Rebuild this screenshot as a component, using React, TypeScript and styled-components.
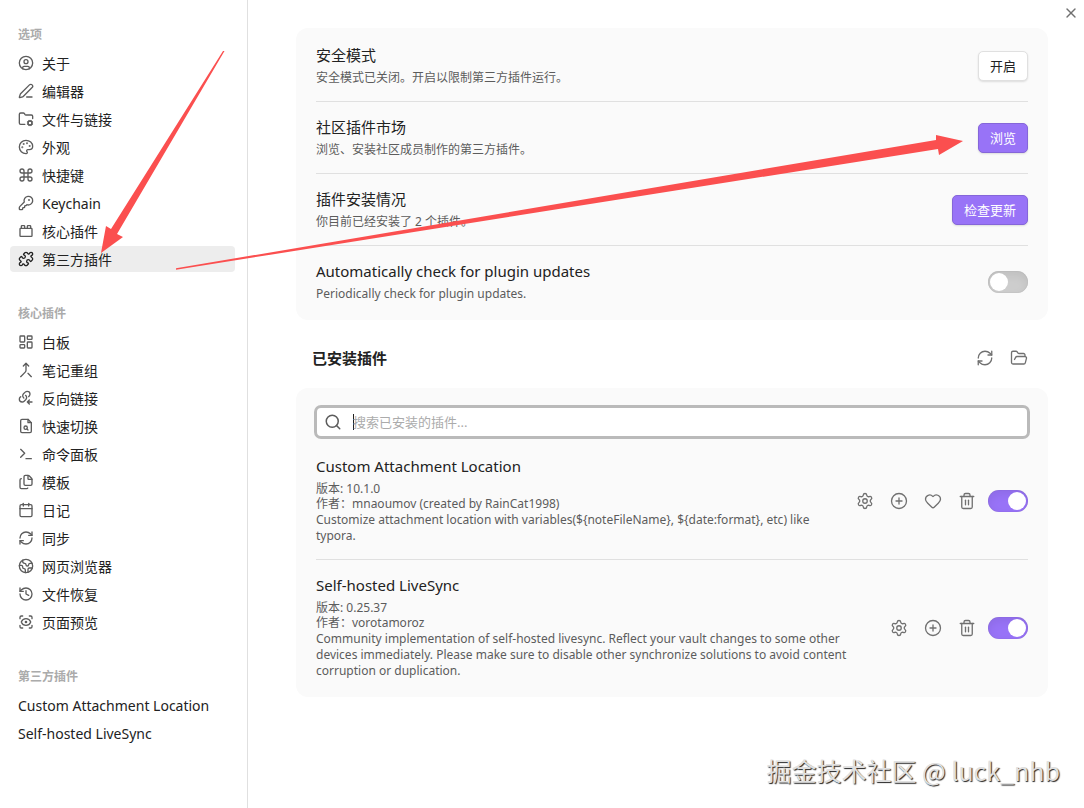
import React, { ReactNode } from "react";
import styled, { createGlobalStyle } from "styled-components";
import {
  CircleUser,
  PenLine,
  FolderCog,
  Palette,
  Command,
  KeyRound,
  ToyBrick,
  Puzzle,
  LayoutDashboard,
  Merge,
  Terminal,
  Files,
  Calendar,
  RefreshCw,
  Earth,
  History,
  ScanEye,
  Settings,
  CirclePlus,
  Heart,
  Trash2,
  FolderOpen,
  Search,
  X,
} from "lucide-react";

const GlobalStyle = createGlobalStyle`
  *, *::before, *::after { box-sizing: border-box; }
  body {
    margin: 0;
    background: #fff;
    color: #222;
    font-family: "Noto Sans", "Noto Sans CJK SC", sans-serif;
    font-size: 14px;
  }
  button, input { font: inherit; color: inherit; }
  h2, h3, p, ul { margin: 0; padding: 0; }
`;

const Page = styled.div`
  position: relative;
  display: flex;
  min-height: 100vh;
`;

const Sidebar = styled.nav`
  display: flex;
  flex-direction: column;
  gap: 32px;
  flex: 0 0 248px;
  padding: 25px 12px 24px 10px;
  border-right: 1px solid #e0e0e0;
`;

const GroupTitle = styled.h2`
  padding: 0 8px;
  font-size: 12px;
  line-height: 20px;
  font-weight: 600;
  color: #ababab;
`;

const NavList = styled.ul`
  display: flex;
  flex-direction: column;
  gap: 2px;
  margin-top: 5px;
  list-style: none;
`;

const NavLink = styled.a<{ $active?: boolean }>`
  display: flex;
  align-items: center;
  gap: 8px;
  height: 26px;
  padding: 0 8px;
  border-radius: 4px;
  background: ${(p) => (p.$active ? "#ededed" : "transparent")};
  color: #222;
  text-decoration: none;
  white-space: nowrap;
  svg {
    flex: none;
    color: ${(p) => (p.$active ? "#222" : "#5c5c5c")};
  }
`;

const Main = styled.main`
  flex: 1;
  min-width: 0;
  padding: 28px 36px 48px 48px;
`;

const Card = styled.section`
  padding: 2px 20px 3px;
  border-radius: 12px;
  background: #fafafa;
`;

const Row = styled.div`
  display: flex;
  align-items: center;
  justify-content: space-between;
  gap: 16px;
  padding: 14px 0 13px;
  & + & { border-top: 1px solid #e0e0e0; }
`;

const RowText = styled.div`
  max-width: 544px;
`;

const RowName = styled.h3`
  font-size: 15px;
  line-height: 22px;
  font-weight: 400;
`;

const RowDescription = styled.div`
  padding: 4px 0 2px;
  font-size: 12px;
  line-height: 16px;
  color: #5c5c5c;
`;

const PluginVersion = styled.p`
  line-height: 15px;
`;

const Controls = styled.div`
  display: flex;
  align-items: center;
  gap: 10px;
`;

const Button = styled.button<{ $accent?: boolean }>`
  height: 30px;
  padding: 0 11px;
  border: 1px solid ${(p) => (p.$accent ? "#8566d9" : "#e0e0e0")};
  border-radius: 5px;
  background: ${(p) => (p.$accent ? "#9873f7" : "#fff")};
  color: ${(p) => (p.$accent ? "#fff" : "#222")};
  font-size: 13px;
  line-height: 20px;
  box-shadow: 0 1px 2px rgba(0, 0, 0, 0.12);
`;

const IconButton = styled.button`
  display: flex;
  align-items: center;
  justify-content: center;
  width: 22px;
  height: 22px;
  padding: 0;
  border: 0;
  background: transparent;
  color: #707070;
`;

const IconGroup = styled.div`
  display: flex;
  gap: 12px;
`;

const Switch = styled.input`
  appearance: none;
  display: flex;
  align-items: center;
  width: 40px;
  height: 22px;
  margin: 0;
  padding: 2px;
  border-radius: 11px;
  background: #cdcdcd;
  box-shadow: inset 0 4px 10px rgba(0, 0, 0, 0.07), inset 0 0 1px rgba(0, 0, 0, 0.21);
  &::before {
    content: "";
    width: 18px;
    height: 18px;
    border-radius: 50%;
    background: #fff;
  }
  &:checked {
    justify-content: flex-end;
    background: #9873f7;
  }
`;

const InstalledHeader = styled.header`
  display: flex;
  align-items: center;
  justify-content: space-between;
  padding: 26px 18px 18px 16px;
`;

const InstalledTitle = styled.h2`
  font-size: 15px;
  line-height: 24px;
  font-weight: 700;
`;

const SearchCard = styled(Card)`
  padding: 17px 18px 3px;
`;

const SearchBox = styled.label`
  display: flex;
  align-items: center;
  gap: 11px;
  height: 34px;
  padding: 0 7px;
  border: 3px solid #bababa;
  border-radius: 7px;
  background: #fff;
  color: #5c5c5c;
`;

const SearchInput = styled.input`
  flex: 1;
  min-width: 0;
  height: 24px;
  padding: 0;
  border: 0;
  outline: 0;
  background: transparent;
  font-size: 13px;
  color: #222;
  &::placeholder { color: #ababab; opacity: 1; }
`;

const Caret = styled.span`
  width: 1px;
  height: 16px;
  margin-right: -12px;
  background: #222;
`;

const PluginList = styled.div`
  padding: 2px 2px 0;
`;

const CloseButton = styled(IconButton)`
  position: absolute;
  top: 2px;
  right: 2px;
`;

const Arrows = styled.svg`
  position: absolute;
  top: 0;
  left: 0;
  pointer-events: none;
`;

const Watermark = styled.div`
  position: absolute;
  right: 24px;
  bottom: 20px;
  font-family: "Noto Sans CJK SC", sans-serif;
  font-size: 25px;
  line-height: 36px;
  color: #e0e0e0;
  text-shadow: 1px 1px 1px #222;
  white-space: nowrap;
`;

const Icon = ({ children }: { children: ReactNode }) => (
  <svg
    width="16"
    height="16"
    viewBox="0 0 24 24"
    fill="none"
    stroke="currentColor"
    strokeWidth="2"
    strokeLinecap="round"
    strokeLinejoin="round"
  >
    {children}
  </svg>
);

const BacklinkIcon = () => (
  <Icon>
    <path d="M8.7 12a5.2 5.2 0 0 1-1.69-3.05 5 5 0 0 1 1.24-3.26l2.55-2.51A4.3 4.3 0 0 1 13.79 2a4.2 4.2 0 0 1 4.21 4.15 4.1 4.1 0 0 1-1.19 2.94L15.9 10" />
    <path d="M11.3 8a5.2 5.2 0 0 1 1.69 3.05 5 5 0 0 1-1.24 3.26L9.2 16.82A4.3 4.3 0 0 1 6.21 18 4.2 4.2 0 0 1 2 13.85a4.1 4.1 0 0 1 1.19-2.94L4.1 10" />
    <path d="m17 21-3-3 3-3M21 18h-7" />
  </Icon>
);

const FileSearchIcon = () => (
  <Icon>
    <path d="M15 2H6a2 2 0 0 0-2 2v16a2 2 0 0 0 2 2h12a2 2 0 0 0 2-2V7z" />
    <path d="M15 2v5h5" />
    <circle cx="11.5" cy="14.5" r="2.5" />
    <path d="M13.3 16.3 15 18" />
  </Icon>
);

const nav = { size: 16, strokeWidth: 2 };
const act = { size: 18, strokeWidth: 1.75 };

type Item = { label: string; icon?: ReactNode; active?: boolean };

const groups: { title: string; items: Item[] }[] = [
  {
    title: "选项",
    items: [
      { label: "关于", icon: <CircleUser {...nav} /> },
      { label: "编辑器", icon: <PenLine {...nav} /> },
      { label: "文件与链接", icon: <FolderCog {...nav} /> },
      { label: "外观", icon: <Palette {...nav} /> },
      { label: "快捷键", icon: <Command {...nav} /> },
      { label: "Keychain", icon: <KeyRound {...nav} /> },
      { label: "核心插件", icon: <ToyBrick {...nav} /> },
      { label: "第三方插件", icon: <Puzzle {...nav} />, active: true },
    ],
  },
  {
    title: "核心插件",
    items: [
      { label: "白板", icon: <LayoutDashboard {...nav} /> },
      { label: "笔记重组", icon: <Merge {...nav} /> },
      { label: "反向链接", icon: <BacklinkIcon /> },
      { label: "快速切换", icon: <FileSearchIcon /> },
      { label: "命令面板", icon: <Terminal {...nav} /> },
      { label: "模板", icon: <Files {...nav} /> },
      { label: "日记", icon: <Calendar {...nav} /> },
      { label: "同步", icon: <RefreshCw {...nav} /> },
      { label: "网页浏览器", icon: <Earth {...nav} /> },
      { label: "文件恢复", icon: <History {...nav} /> },
      { label: "页面预览", icon: <ScanEye {...nav} /> },
    ],
  },
  {
    title: "第三方插件",
    items: [{ label: "Custom Attachment Location" }, { label: "Self-hosted LiveSync" }],
  },
];

const Setting = ({ name, description, children }: { name: string; description: ReactNode; children: ReactNode }) => (
  <Row>
    <RowText>
      <RowName>{name}</RowName>
      <RowDescription>{description}</RowDescription>
    </RowText>
    {children}
  </Row>
);

export default function App() {
  return (
    <>
      <GlobalStyle />
      <Page>
        <Sidebar>
          {groups.map((g) => (
            <div key={g.title}>
              <GroupTitle>{g.title}</GroupTitle>
              <NavList>
                {g.items.map((i) => (
                  <li key={i.label}>
                    <NavLink href="#" $active={i.active}>
                      {i.icon}
                      {i.label}
                    </NavLink>
                  </li>
                ))}
              </NavList>
            </div>
          ))}
        </Sidebar>
        <Main>
          <Card>
            <Setting name="安全模式" description="安全模式已关闭。开启以限制第三方插件运行。">
              <Button>开启</Button>
            </Setting>
            <Setting name="社区插件市场" description="浏览、安装社区成员制作的第三方插件。">
              <Button $accent>浏览</Button>
            </Setting>
            <Setting name="插件安装情况" description="你目前已经安装了 2 个插件。">
              <Button $accent>检查更新</Button>
            </Setting>
            <Setting name="Automatically check for plugin updates" description="Periodically check for plugin updates.">
              <Switch type="checkbox" aria-label="Automatically check for plugin updates" />
            </Setting>
          </Card>
          <InstalledHeader>
            <InstalledTitle>已安装插件</InstalledTitle>
            <IconGroup>
              <IconButton aria-label="刷新"><RefreshCw {...act} /></IconButton>
              <IconButton aria-label="打开文件夹"><FolderOpen {...act} /></IconButton>
            </IconGroup>
          </InstalledHeader>
          <SearchCard>
            <SearchBox>
              <Search size={18} />
              <Caret />
              <SearchInput type="text" placeholder="搜索已安装的插件..." aria-label="搜索已安装的插件" />
            </SearchBox>
            <PluginList>
              <Setting
                name="Custom Attachment Location"
                description={
                  <>
                    <PluginVersion>版本: 10.1.0</PluginVersion>
                    <p>作者：mnaoumov (created by RainCat1998)</p>
                    <p>{"Customize attachment location with variables(${noteFileName}, ${date:format}, etc) like typora."}</p>
                  </>
                }
              >
                <Controls>
                  <IconGroup>
                    <IconButton aria-label="选项"><Settings {...act} /></IconButton>
                    <IconButton aria-label="快捷键"><CirclePlus {...act} /></IconButton>
                    <IconButton aria-label="赞助"><Heart {...act} /></IconButton>
                    <IconButton aria-label="卸载"><Trash2 {...act} /></IconButton>
                  </IconGroup>
                  <Switch type="checkbox" defaultChecked aria-label="Custom Attachment Location" />
                </Controls>
              </Setting>
              <Setting
                name="Self-hosted LiveSync"
                description={
                  <>
                    <PluginVersion>版本: 0.25.37</PluginVersion>
                    <p>作者：vorotamoroz</p>
                    <p>
                      Community implementation of self-hosted livesync. Reflect your vault changes to some other devices
                      immediately. Please make sure to disable other synchronize solutions to avoid content corruption
                      or duplication.
                    </p>
                  </>
                }
              >
                <Controls>
                  <IconGroup>
                    <IconButton aria-label="选项"><Settings {...act} /></IconButton>
                    <IconButton aria-label="快捷键"><CirclePlus {...act} /></IconButton>
                    <IconButton aria-label="卸载"><Trash2 {...act} /></IconButton>
                  </IconGroup>
                  <Switch type="checkbox" defaultChecked aria-label="Self-hosted LiveSync" />
                </Controls>
              </Setting>
            </PluginList>
          </SearchCard>
        </Main>
        <CloseButton aria-label="关闭"><X size={16} strokeWidth={2} /></CloseButton>
        <Arrows width="1000" height="300" viewBox="0 0 1000 300" fill="#fb4f4f" aria-hidden="true">
          <path d="M223 51h1.5L117 234l6 3-22 16 5-27 5 3Z" />
          <path d="M176 268.3 936 140v-5l27 6-24 14-1-6L176 269.7Z" />
        </Arrows>
        <Watermark>掘金技术社区 @ luck_nhb</Watermark>
      </Page>
    </>
  );
}
